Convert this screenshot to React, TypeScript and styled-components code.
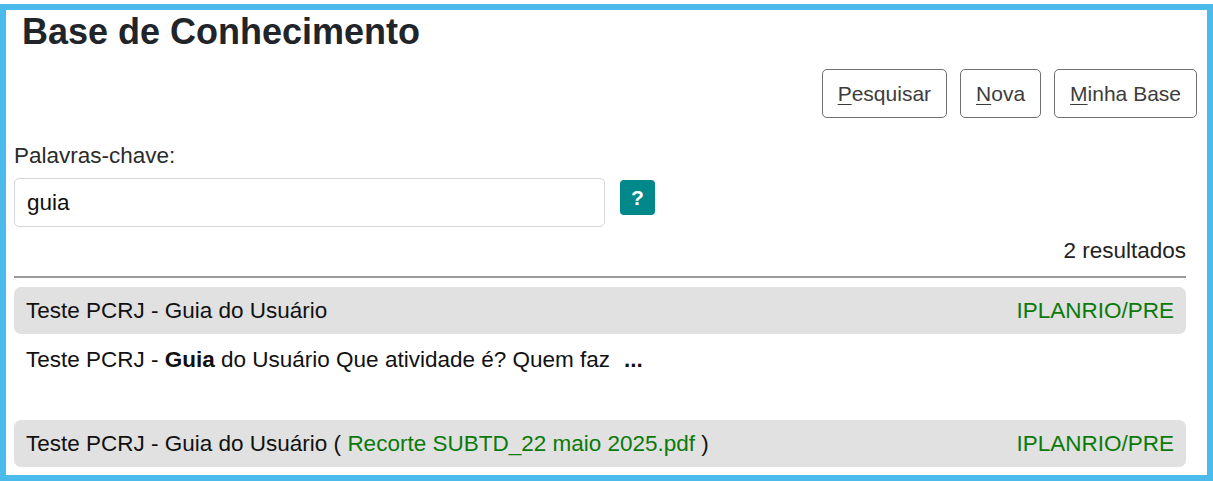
import React from "react";
import styled, { createGlobalStyle } from "styled-components";

const GlobalStyle = createGlobalStyle`
  html, body {
    margin: 0;
    padding: 0;
    background: #ffffff;
    overflow: hidden;
  }
  body {
    font-family: "Liberation Sans", Arial, Helvetica, sans-serif;
    color: #212121;
  }
  * { box-sizing: border-box; }
`;

const Frame = styled.div`
  margin-top: 4px;
  height: 477px;
  border: 6px solid #4bbbeb;
  background: #ffffff;
  padding: 2px 10px 0 8px;
  display: flex;
  flex-direction: column;
`;

const Title = styled.h1`
  margin: 0 0 0 8px;
  font-size: 36px;
  line-height: 40px;
  font-weight: 700;
  color: #212529;
`;

const Toolbar = styled.div`
  margin-top: 17px;
  display: flex;
  justify-content: flex-end;
  gap: 13px;
`;

const ActionButton = styled.button`
  height: 49px;
  padding: 0 15px;
  display: inline-flex;
  align-items: center;
  border: 1.5px solid #707070;
  border-radius: 5px;
  background: #ffffff;
  color: #3c3c3c;
  font-family: "Liberation Sans", Arial, Helvetica, sans-serif;
  font-size: 21px;
  line-height: 24px;
  cursor: pointer;

  u {
    text-decoration-thickness: 1px;
    text-underline-offset: 3px;
  }
`;

const Content = styled.div`
  padding-right: 11px;
  display: flex;
  flex-direction: column;
`;

const Label = styled.label`
  margin-top: 25px;
  font-size: 22.5px;
  line-height: 26px;
  color: #2b2b2b;
`;

const SearchRow = styled.div`
  margin-top: 9px;
  display: flex;
  align-items: flex-start;
  gap: 15px;
`;

const SearchInput = styled.input`
  width: 591px;
  height: 49px;
  padding: 0 12px;
  border: 1px solid #d3d6da;
  border-radius: 5px;
  font-family: "Liberation Sans", Arial, Helvetica, sans-serif;
  font-size: 22.5px;
  color: #111111;
  outline: none;
`;

const HelpButton = styled.button`
  margin-top: 2px;
  width: 35px;
  height: 35px;
  border: none;
  border-radius: 4px;
  background: #00888a;
  color: #ffffff;
  font-family: "Liberation Sans", Arial, Helvetica, sans-serif;
  font-size: 21px;
  font-weight: 700;
  display: flex;
  align-items: center;
  justify-content: center;
  padding: 0;
`;

const ResultCount = styled.div`
  margin-top: 11px;
  text-align: right;
  font-size: 22.5px;
  line-height: 26px;
  color: #222222;
`;

const Divider = styled.hr`
  margin: 12px 0 0 0;
  border: none;
  height: 2px;
  background: #9a9a9a;
`;

const ResultHeader = styled.div<{ $first?: boolean }>`
  margin-top: ${(p) => (p.$first ? "9px" : "0")};
  height: 47px;
  padding: 0 12px;
  display: flex;
  align-items: center;
  justify-content: space-between;
  background: #e1e1e1;
  border-radius: 7px;
  font-size: 22.5px;
  color: #111111;
`;

const Green = styled.span`
  color: #0a7a0a;
`;

const Snippet = styled.div`
  margin: 13px 0 47px 0;
  padding-left: 12px;
  font-size: 22.5px;
  line-height: 26px;
  color: #111111;

  b {
    font-weight: 700;
  }
`;

const Ellipsis = styled.b`
  margin-left: 14px;
`;

export default function App() {
  return (
    <>
      <GlobalStyle />
      <Frame>
        <Title>Base de Conhecimento</Title>
        <Toolbar>
          <ActionButton>
            <u>P</u>esquisar
          </ActionButton>
          <ActionButton>
            <u>N</u>ova
          </ActionButton>
          <ActionButton>
            <u>M</u>inha Base
          </ActionButton>
        </Toolbar>
        <Content>
          <Label>Palavras-chave:</Label>
          <SearchRow>
            <SearchInput defaultValue="guia" />
            <HelpButton>?</HelpButton>
          </SearchRow>
          <ResultCount>2 resultados</ResultCount>
          <Divider />
          <ResultHeader $first>
            <span>Teste PCRJ - Guia do Usuário</span>
            <Green>IPLANRIO/PRE</Green>
          </ResultHeader>
          <Snippet>
            Teste PCRJ - <b>Guia</b> do Usuário Que atividade é? Quem faz
            <Ellipsis>...</Ellipsis>
          </Snippet>
          <ResultHeader>
            <span>
              Teste PCRJ - Guia do Usuário ( <Green>Recorte SUBTD_22 maio 2025.pdf</Green> )
            </span>
            <Green>IPLANRIO/PRE</Green>
          </ResultHeader>
        </Content>
      </Frame>
    </>
  );
}
